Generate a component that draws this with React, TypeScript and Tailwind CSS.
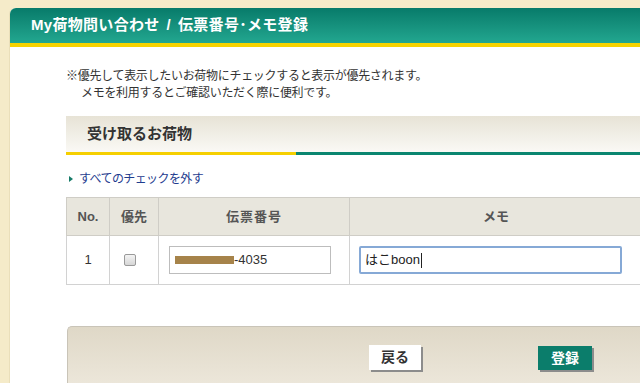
const jp = "font-['Liberation_Sans','Noto_Sans_CJK_JP',sans-serif]";

function NoteBlock() {
  return (
    <div className="ml-[56px] mt-[21px] text-[12px] leading-[17px] tracking-[-0.3px] text-[#333]">
      <p>※優先して表示したいお荷物にチェックすると表示が優先されます。</p>
      <p className="pl-[15px]">メモを利用するとご確認いただく際に便利です。</p>
    </div>
  );
}

function SectionTitle() {
  return (
    <div className="ml-[56px] mt-[14px] w-[600px]">
      <div className="flex h-[36px] items-center bg-gradient-to-b from-[#e7e3d6] to-[#faf9f5] pl-[21px] text-[15px] font-bold text-[#333]">
        受け取るお荷物
      </div>
      <div className="flex h-[3px]">
        <div className="w-[230px] bg-[#f5cf00]" />
        <div className="flex-1 bg-[#0b8670]" />
      </div>
    </div>
  );
}

function PackageTable() {
  return (
    <table className="ml-[56px] mt-[10px] w-[576px] table-fixed border-collapse text-[12px] text-[#333]">
      <colgroup>
        <col className="w-[43px]" />
        <col className="w-[49px]" />
        <col className="w-[191px]" />
        <col className="w-[293px]" />
      </colgroup>
      <thead>
        <tr className="h-[38px] bg-[#e8e6dd] text-[13px] font-bold text-[#555]">
          <th className="border border-[#cfcdc6] font-bold">No.</th>
          <th className="border border-[#cfcdc6] font-bold">優先</th>
          <th className="border border-[#cfcdc6] font-bold tracking-[1px]">伝票番号</th>
          <th className="border border-[#cfcdc6] font-bold">メモ</th>
        </tr>
      </thead>
      <tbody>
        <tr className="h-[49px]">
          <td className="border border-[#d2d2d2] text-center text-[13px]">1</td>
          <td className="border border-[#d2d2d2]">
            <div className="ml-[14px] h-[12px] w-[12px] rounded-[2px] border border-[#9a9a9a] bg-gradient-to-b from-[#f4f4f4] to-[#d6d6d6]" />
          </td>
          <td className="border border-[#d2d2d2] pl-[10px]">
            <div className="flex h-[28px] w-[162px] items-center border border-[#bdbdbd] pl-[5px] text-[13px] text-[#333]">
              <span className="inline-block h-[8px] w-[59px] shrink-0 bg-[#a6834a]" />
              <span>-4035</span>
            </div>
          </td>
          <td className="border border-[#d2d2d2] pl-[9px]">
            <div className="flex h-[28px] w-[263px] items-center rounded-[2px] border-2 border-[#86a9d6] pl-[4px] text-[13px] text-[#222]">
              <span>はこboon</span>
              <span className="ml-[1px] h-[15px] w-px bg-[#222]" />
            </div>
          </td>
        </tr>
      </tbody>
    </table>
  );
}

function ActionBar() {
  return (
    <div className="ml-[57px] mt-[41px] h-[80px] w-[640px] rounded-tl-[5px] border-t border-l border-[#c9c4b8] bg-gradient-to-b from-[#dfd8c7] to-[#f1ece1] pt-[18px]">
      <div className="flex">
        <button className="ml-[301px] h-[25px] w-[52px] bg-white text-[14px] font-bold text-[#333] shadow-[2px_2px_0_#8c8c8c]">
          戻る
        </button>
        <button className="ml-[117px] mt-[1px] h-[24px] w-[54px] bg-[#0b7d6b] text-[14px] font-bold text-white shadow-[2px_2px_0_#8c8c8c]">
          登録
        </button>
      </div>
    </div>
  );
}

export default function App() {
  return (
    <div className={`h-[383px] w-[640px] overflow-hidden bg-[#f5ebc9] pt-[8px] ${jp}`}>
      <div className="ml-[9px] h-[400px] w-[700px] rounded-tl-[6px] border-l border-[#eadfba] bg-white">
        <div className="flex h-[39px] items-center rounded-tl-[6px] border-b-4 border-[#f7d300] bg-gradient-to-b from-[#077b6a] to-[#22a790] pl-[21px] text-[15px] font-bold tracking-[0.3px] text-white">
          My荷物問い合わせ<span className="mx-[7px]">/</span>伝票番号･メモ登録
        </div>
        <NoteBlock />
        <SectionTitle />
        <a className="ml-[59px] mt-[16px] flex h-[16px] items-center text-[12px] tracking-[-0.6px] text-[#1f3d8f]">
          <span className="mr-[6px] h-0 w-0 border-y-[3px] border-l-[4px] border-y-transparent border-l-[#167b68]" />
          すべてのチェックを外す
        </a>
        <PackageTable />
        <ActionBar />
      </div>
    </div>
  );
}
